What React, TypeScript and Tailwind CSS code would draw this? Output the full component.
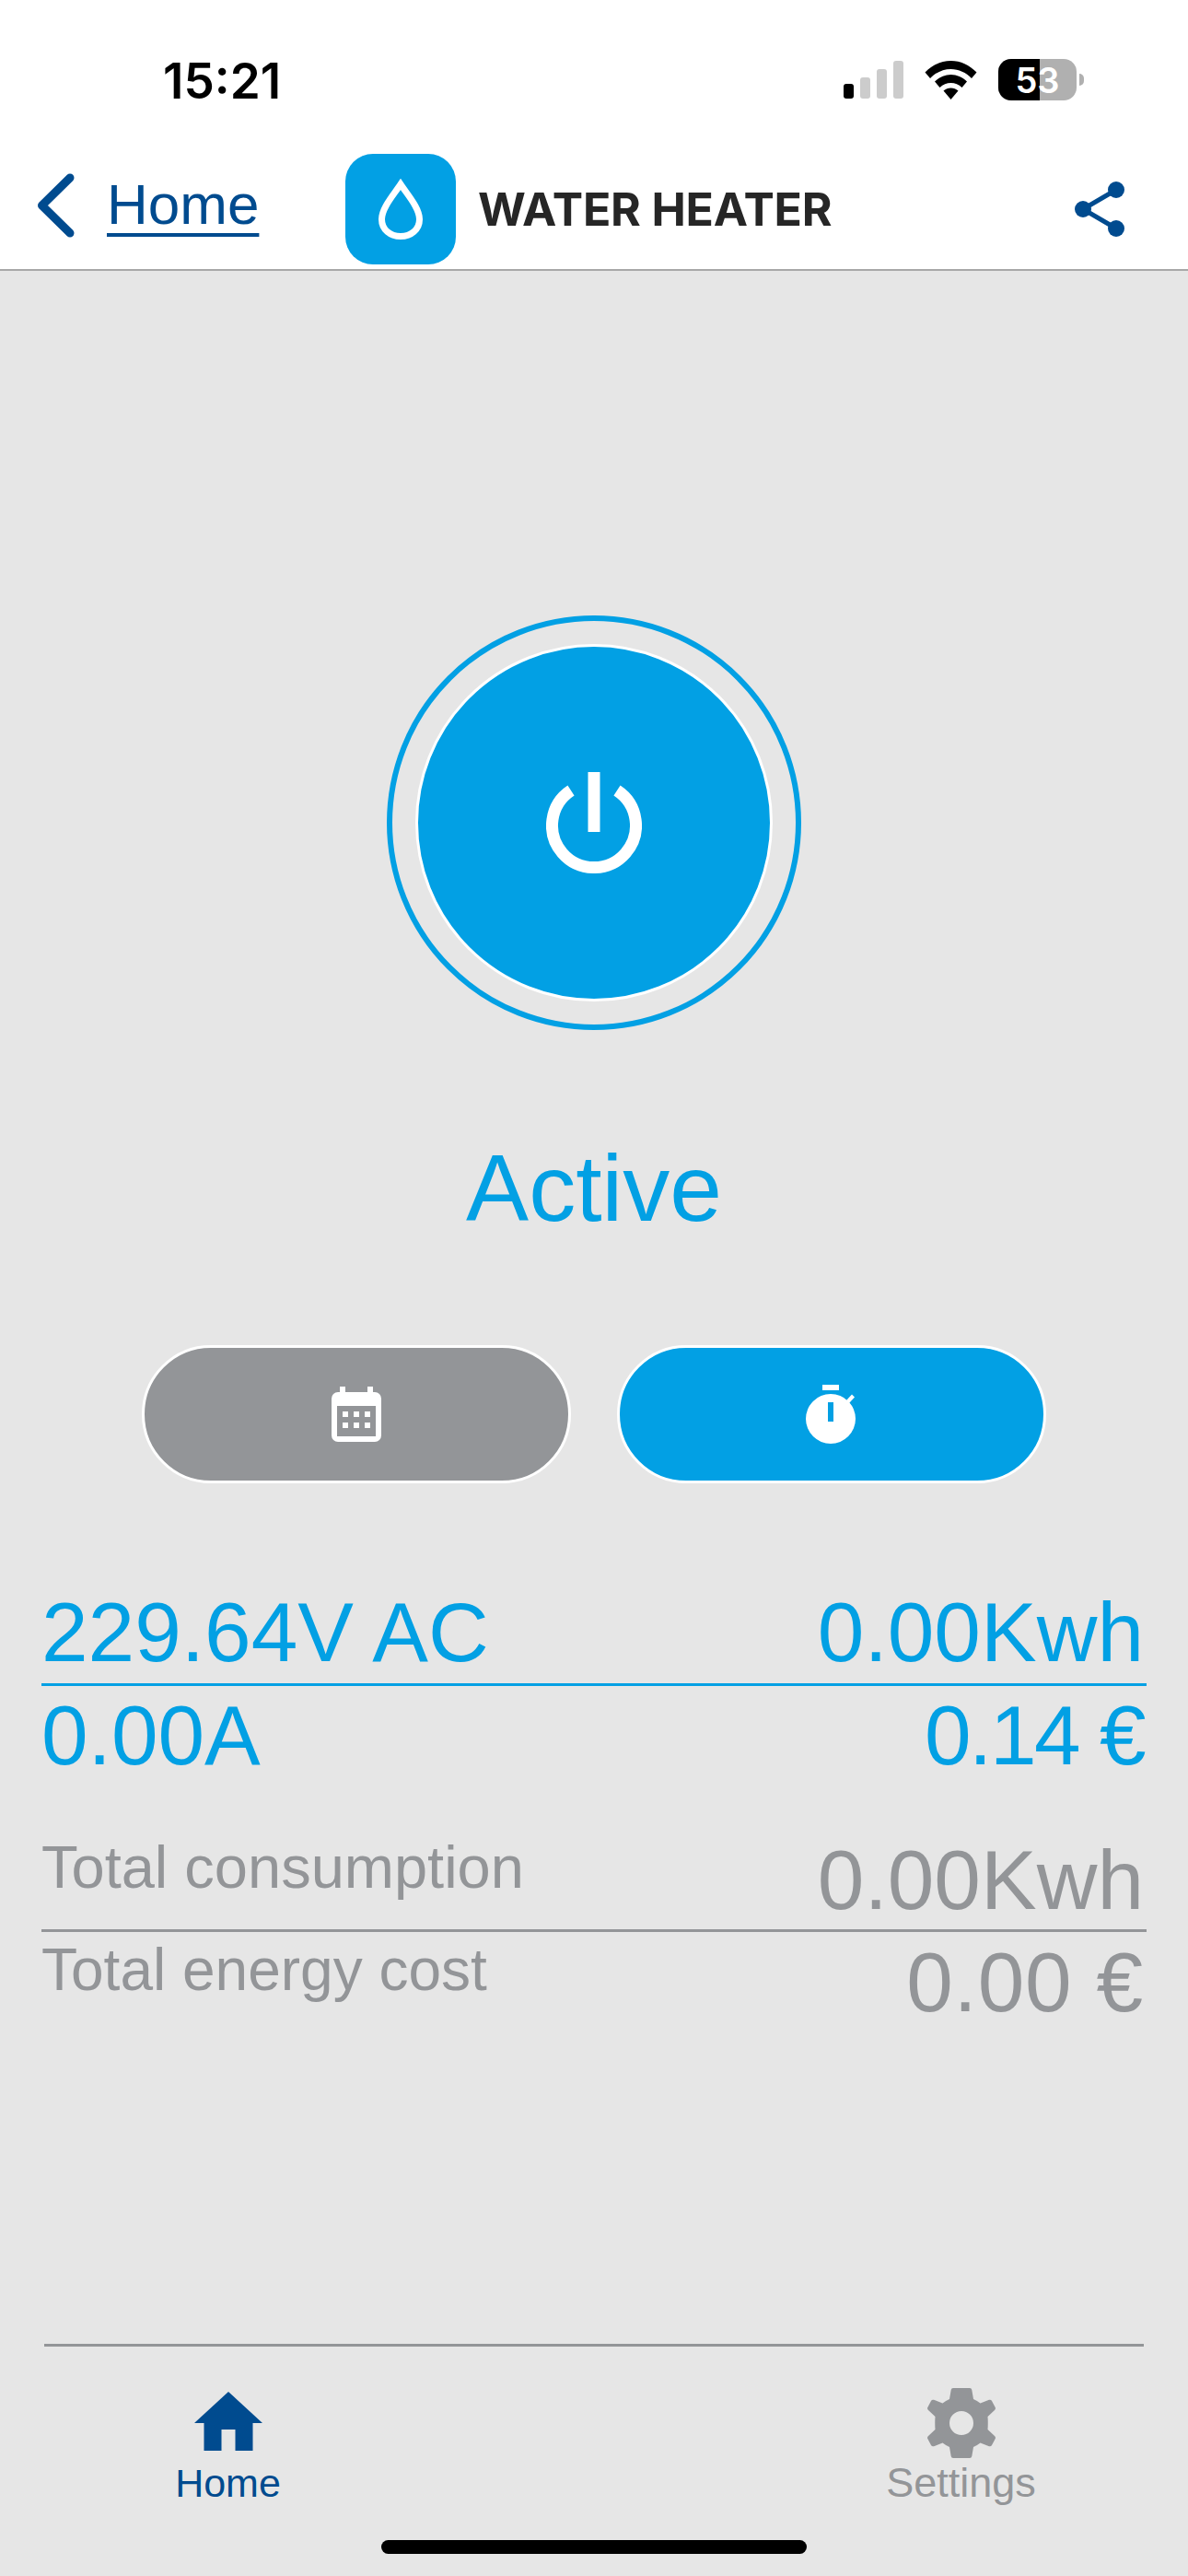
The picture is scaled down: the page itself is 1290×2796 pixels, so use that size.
import React from "react";

const BLUE = "text-[#02a0e4]";
const GREY = "text-[#939598]";

function ChevronLeft() {
  return (
    <svg width="40" height="70" viewBox="0 0 40 70" className="block">
      <path d="M35 5 L4.500 35 L35 65" fill="none" stroke="#004b8f" strokeWidth="9" strokeLinecap="round" strokeLinejoin="round" />
    </svg>
  );
}

function Drop() {
  return (
    <svg width="48" height="66" viewBox="0 0 48 66" className="block">
      <path d="M24 6 C16 18 3.500 32 3.500 44 C3.500 55 12.500 62.500 24 62.500 C35.500 62.500 44.500 55 44.500 44 C44.500 32 32 18 24 6 Z" fill="none" stroke="#fff" strokeWidth="7" />
    </svg>
  );
}

function ShareIcon() {
  return (
    <svg width="54" height="60" viewBox="0 0 54 60" className="block">
      <path d="M45 9 L9 30 L45 51" fill="none" stroke="#004b8f" strokeWidth="5" />
      <circle cx="45" cy="9" r="9" fill="#004b8f" />
      <circle cx="9" cy="30" r="9" fill="#004b8f" />
      <circle cx="45" cy="51" r="9" fill="#004b8f" />
    </svg>
  );
}

function StatusIcons() {
  return (
    <div className="mt-[3px] flex items-center">
      <svg width="65" height="41" viewBox="0 0 65 41" className="block">
        <rect x="0" y="25" width="11" height="16" rx="3" fill="#000" />
        <rect x="18" y="18" width="11" height="23" rx="3" fill="#ccc" />
        <rect x="36" y="9" width="11" height="32" rx="3" fill="#ccc" />
        <rect x="54" y="0" width="11" height="41" rx="3" fill="#ccc" />
      </svg>
      <svg width="57" height="42" viewBox="0 0 57 42" className="ml-[23px] block">
        <path d="M28.500 0 C39 0 48.500 4.500 56.500 12.500 L51 19 C45 12.800 37 9 28.500 9 C20 9 12 12.800 6 19 L0.500 12.500 C8.500 4.500 18 0 28.500 0 Z" fill="#000" />
        <path d="M28.500 15 C35 15 41 17.800 46 22.500 L40.500 29 C37 25.800 33 24 28.500 24 C24 24 20 25.800 16.500 29 L11 22.500 C16 17.800 22 15 28.500 15 Z" fill="#000" />
        <path d="M28.500 29.500 C31.500 29.500 34 30.500 36.500 32.500 L28.500 42 L20.500 32.500 C23 30.500 25.500 29.500 28.500 29.500 Z" fill="#000" />
      </svg>
      <div className="relative ml-[23px] flex h-[45px] w-[85px] items-center justify-center rounded-[14px] bg-[#b0b0b0] text-[38px] leading-[40px] font-semibold text-white [font-family:Inter,sans-serif]">
        <div className="absolute inset-y-0 left-0 w-[45px] rounded-l-[14px] bg-black" />
        <span className="relative">53</span>
      </div>
      <div className="ml-[3px] h-[13px] w-[5px] rounded-r-full bg-[#b0b0b0]" />
    </div>
  );
}

function PowerIcon() {
  return (
    <svg width="104" height="110" viewBox="0 0 104 110" className="block">
      <path d="M27 20 A45.500 45.500 0 1 0 77 20" fill="none" stroke="#fff" strokeWidth="13" />
      <rect x="45.500" y="0" width="13" height="65" fill="#fff" />
    </svg>
  );
}

function CalendarIcon() {
  return (
    <svg width="54" height="60" viewBox="0 0 54 60" className="block">
      <rect x="9" y="0" width="6" height="8" fill="#fff" />
      <rect x="39" y="0" width="6" height="8" fill="#fff" />
      <path fillRule="evenodd" fill="#fff" d="M7 6 H47 A7 7 0 0 1 54 13 V53 A7 7 0 0 1 47 60 H7 A7 7 0 0 1 0 53 V13 A7 7 0 0 1 7 6 Z M6 21 V54 H48 V21 Z" />
      <rect x="12" y="27" width="6" height="6" fill="#fff" />
      <rect x="24" y="27" width="6" height="6" fill="#fff" />
      <rect x="36" y="27" width="6" height="6" fill="#fff" />
      <rect x="12" y="39" width="6" height="6" fill="#fff" />
      <rect x="24" y="39" width="6" height="6" fill="#fff" />
      <rect x="36" y="39" width="6" height="6" fill="#fff" />
    </svg>
  );
}

function TimerIcon() {
  return (
    <svg width="56" height="64" viewBox="0 0 56 64" className="block">
      <rect x="18" y="0" width="18" height="6" fill="#fff" />
      <path d="M44 17 L50 10.500 L53 13.500 L47 20 Z" fill="#fff" />
      <path fillRule="evenodd" fill="#fff" d="M27 10 A27 27 0 1 1 27 64 A27 27 0 0 1 27 10 Z M24 19 V40 H30 V19 Z" />
    </svg>
  );
}

function HomeIcon() {
  return (
    <svg width="74" height="64" viewBox="0 0 74 64" className="block">
      <path d="M37 0 L74 34 H63.500 V64 H44.500 V41 H29.500 V64 H10.500 V34 H0 Z" fill="#004b8f" />
    </svg>
  );
}

function GearIcon() {
  return (
    <svg width="74" height="76" viewBox="0 0 74 76" className="block">
      <path
        fillRule="evenodd"
        fill="#939598"
        d="M28 0 H46 Q48 0 48.300 2 L50 12 Q54 13.700 57.500 16.500 L67 12.800 Q69 12.200 70 14 L73.700 21 Q74.500 22.600 73 24 L65.500 31 Q66 38 65.500 45 L73 52 Q74.500 53.400 73.700 55 L70 62 Q69 63.800 67 63.200 L57.500 59.500 Q54 62.300 50 64 L48.300 74 Q48 76 46 76 H28 Q26 76 25.700 74 L24 64 Q20 62.300 16.500 59.500 L7 63.200 Q5 63.800 4 62 L0.300 55 Q-0.500 53.400 1 52 L8.500 45 Q8 38 8.500 31 L1 24 Q-0.500 22.600 0.300 21 L4 14 Q5 12.200 7 12.800 L16.500 16.500 Q20 13.700 24 12 L25.700 2 Q26 0 28 0 Z M37 25 A13 13 0 1 0 37 51 A13 13 0 1 0 37 25 Z"
      />
    </svg>
  );
}

function StatRow({ left, right, color, leftClass, rightClass }: { left: string; right: string; color: string; leftClass?: string; rightClass?: string }) {
  return (
    <div className={`flex items-start justify-between ${color}`}>
      <span className={leftClass ?? "text-[91px] leading-[90px] font-light"}>{left}</span>
      <span className={`mr-[3px] text-[91px] leading-[90px] font-light ${rightClass ?? ""}`}>{right}</span>
    </div>
  );
}

export default function App() {
  const totalLabel = "mt-[-8px] text-[65px] leading-[78px] font-light";

  return (
    <div className="flex h-[2796px] w-[1290px] flex-col overflow-hidden bg-[#e6e6e6] [font-family:'Liberation_Sans',Arial,sans-serif]">
      {/* status bar */}
      <div className="flex h-[167px] shrink-0 items-start justify-between bg-white pt-[61px] pr-[113px] pl-[177px]">
        <span className="text-[53px] leading-[54px] font-semibold text-black [font-family:Inter,sans-serif]">15:21</span>
        <StatusIcons />
      </div>

      {/* nav header */}
      <header className="flex h-[127px] shrink-0 items-start border-b-[2px] border-[#a8a8a8] bg-white pl-[41px]">
        <div className="mt-[21px]">
          <ChevronLeft />
        </div>
        <a className="mt-[23px] ml-[35px] w-[165px] text-[62px] leading-[64px] text-[#004b8f] underline decoration-[4px] underline-offset-[10px]">Home</a>
        <div className="ml-[94px] flex h-[120px] w-[120px] items-center justify-center rounded-[30px] bg-[#02a0e4]">
          <Drop />
        </div>
        <span className="mt-[30px] ml-[24px] text-[50px] leading-[60px] font-bold tracking-[-0.2px] text-[#262626] [font-family:Inter,sans-serif]">WATER HEATER</span>
        <div className="mt-[30px] mr-[69px] ml-auto">
          <ShareIcon />
        </div>
      </header>

      {/* power button */}
      <main className="flex grow flex-col">
        <div className="mt-[374px] flex justify-center">
          <div className="flex h-[450px] w-[450px] items-center justify-center rounded-full border-[6px] border-[#02a0e4]">
            <div className="flex h-[388px] w-[388px] items-center justify-center rounded-full border-[3px] border-white bg-[#02a0e4]">
              <PowerIcon />
            </div>
          </div>
        </div>

        <div className={`mt-[112px] text-center text-[102px] leading-[120px] ${BLUE}`}>Active</div>

        <div className="mt-[110px] flex justify-center gap-[50px]">
          <button className="flex h-[150px] w-[466px] items-center justify-center rounded-[75px] border-[3px] border-white bg-[#939598]">
            <CalendarIcon />
          </button>
          <button className="flex h-[150px] w-[466px] items-center justify-center rounded-[75px] border-[3px] border-white bg-[#02a0e4]">
            <TimerIcon />
          </button>
        </div>

        {/* readings */}
        <section className="mt-[117px] px-[45px]">
          <StatRow left="229.64V AC" right="0.00Kwh" color={BLUE} />
          <div className="mt-[10px] h-[3px] bg-[#02a0e4]" />
          <div className="mt-[9px]">
            <StatRow left="0.00A" right="0.14 €" color={BLUE} rightClass="tracking-[-2.500px]" />
          </div>

          <div className="mt-[67px]">
            <StatRow left="Total consumption" right="0.00Kwh" color={GREY} leftClass={totalLabel} />
          </div>
          <div className="mt-[8px] h-[3px] bg-[#939598]" />
          <div className="mt-[10px]">
            <StatRow
              left="Total energy cost"
              right="0.00 €"
              color={GREY}
              leftClass="mt-[-8px] text-[64px] leading-[78px] font-light"
              rightClass="tracking-[0.8px]"
            />
          </div>
        </section>
      </main>

      {/* bottom tabs */}
      <footer className="flex h-[252px] shrink-0 flex-col items-center">
        <div className="flex h-[213px] w-[1194px] justify-between border-t-[3px] border-[#939598] pt-[45px]">
          <div className="ml-[142px] flex w-[115px] flex-col items-center text-[#004b8f]">
            <div className="mt-[4px]">
              <HomeIcon />
            </div>
            <span className="mt-[13px] text-[43px] leading-[44px]">Home</span>
          </div>
          <div className="mr-[117px] flex w-[163px] flex-col items-center text-[#939598]">
            <GearIcon />
            <span className="mt-[5px] text-[45px] leading-[44px]">Settings</span>
          </div>
        </div>
        {/* home indicator */}
        <div className="h-[15px] w-[462px] rounded-full bg-black" />
      </footer>
    </div>
  );
}
